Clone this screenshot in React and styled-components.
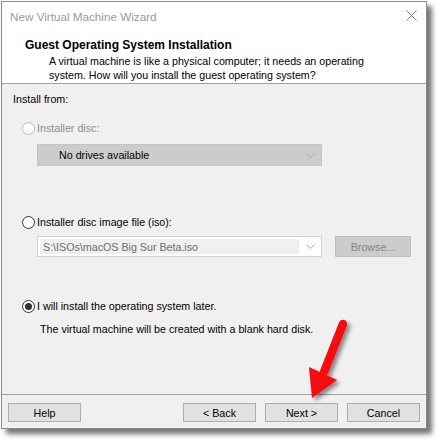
import React from "react";
import styled, { createGlobalStyle } from "styled-components";

const GlobalStyle = createGlobalStyle`
  html, body {
    margin: 0;
    padding: 0;
    background: #ffffff;
  }
  body {
    font-family: "Liberation Sans", Arial, sans-serif;
    font-size: 10.7px;
    color: #000000;
  }
`;

const App = () => {
  return (
    <Page>
      <GlobalStyle />
      <Window>
        <TitleBar>
          <TitleText>New Virtual Machine Wizard</TitleText>
          <CloseButton>
            <svg width="11" height="11" viewBox="0 0 11 11">
              <path d="M0.5 0.5 L10.5 10.5 M10.5 0.5 L0.5 10.5" stroke="#7a7a7a" strokeWidth="1" fill="none" />
            </svg>
          </CloseButton>
        </TitleBar>

        <Header>
          <Heading>Guest Operating System Installation</Heading>
          <Description>
            A virtual machine is like a physical computer; it needs an operating
            <br />
            system. How will you install the guest operating system?
          </Description>
        </Header>

        <Body>
          <Label>Install from:</Label>

          <RadioRow $top={15} $disabled>
            <Radio $disabled />
            <span>Installer disc:</span>
          </RadioRow>
          <DriveSelect>
            <span>No drives available</span>
            <Chevron />
          </DriveSelect>

          <RadioRow $top={49}>
            <Radio />
            <span>Installer disc image file (iso):</span>
          </RadioRow>
          <FileRow>
            <IsoCombo>
              <IsoText>S:\ISOs\macOS Big Sur Beta.iso</IsoText>
              <Chevron />
            </IsoCombo>
            <BrowseButton>Browse...</BrowseButton>
          </FileRow>

          <RadioRow $top={42}>
            <Radio $checked />
            <span>I will install the operating system later.</span>
          </RadioRow>
          <Note>The virtual machine will be created with a blank hard disk.</Note>
        </Body>

        <Footer>
          <Button>Help</Button>
          <Spacer />
          <Button>&lt; Back</Button>
          <Button>Next &gt;</Button>
          <Button>Cancel</Button>
        </Footer>
      </Window>

      <Pointer width="442" height="444" viewBox="0 0 442 444">
        <defs>
          <filter id="arrowShadow" x="-50%" y="-50%" width="200%" height="200%">
            <feDropShadow dx="3" dy="3" stdDeviation="2" floodColor="#000" floodOpacity="0.45" />
          </filter>
        </defs>
        <g filter="url(#arrowShadow)">
          <line x1="343" y1="324" x2="324" y2="372" stroke="#f50a0a" strokeWidth="8.5" strokeLinecap="round" />
          <polygon points="309,367 337,380 312,398" fill="#f50a0a" />
        </g>
      </Pointer>
    </Page>
  );
};

const Chevron = () => (
  <ChevronIcon width="9" height="5" viewBox="0 0 9 5">
    <path d="M0.5 0.5 L4.5 4.5 L8.5 0.5" stroke="#a9a9a9" strokeWidth="1" fill="none" />
  </ChevronIcon>
);

const Page = styled.div`
  position: relative;
  width: 442px;
  height: 444px;
  padding: 1px 0 0 1px;
  box-sizing: border-box;
`;

const Window = styled.div`
  width: 426px;
  height: 428px;
  box-sizing: border-box;
  border: 1px solid #8a8a8a;
  background: #ffffff;
  display: flex;
  flex-direction: column;
  box-shadow: 5px 5px 5px rgba(0, 0, 0, 0.55);
`;

const TitleBar = styled.div`
  height: 30px;
  display: flex;
  align-items: center;
  justify-content: space-between;
  padding: 0 9px 0 8px;
  flex-shrink: 0;
`;

const TitleText = styled.div`
  font-size: 11.7px;
  color: #9a9a9a;
  margin-top: -2px;
`;

const CloseButton = styled.div`
  display: flex;
  align-items: center;
  margin-top: -4px;
`;

const Header = styled.div`
  height: 52px;
  box-sizing: border-box;
  padding: 6px 0 0 23px;
  border-bottom: 1px solid #a0a0a0;
  flex-shrink: 0;
`;

const Heading = styled.div`
  font-size: 12px;
  font-weight: 700;
  line-height: 14px;
`;

const Description = styled.div`
  margin-top: 2px;
  padding-left: 24px;
  line-height: 14px;
`;

const Body = styled.div`
  flex: 1;
  background: #f0f0f0;
  border-bottom: 1px solid #a0a0a0;
  padding: 8px 0 0 11px;
  display: flex;
  flex-direction: column;
  align-items: flex-start;
`;

const Label = styled.div`
  line-height: 14px;
`;

const RadioRow = styled.div`
  display: flex;
  align-items: center;
  height: 14px;
  margin-top: ${(p) => p.$top}px;
  padding-left: 9px;
  color: ${(p) => (p.$disabled ? "#8c8c8c" : "#000000")};
`;

const Radio = styled.span`
  position: relative;
  width: 13px;
  height: 13px;
  box-sizing: border-box;
  border-radius: 50%;
  border: 1px solid ${(p) => (p.$disabled ? "#bcbcbc" : "#333333")};
  background: #ffffff;
  margin-right: 2px;
  flex-shrink: 0;

  &::after {
    content: "";
    display: ${(p) => (p.$checked ? "block" : "none")};
    position: absolute;
    left: 2px;
    top: 2px;
    width: 7px;
    height: 7px;
    border-radius: 50%;
    background: #333333;
  }
`;

const DriveSelect = styled.div`
  margin: 9px 0 0 24px;
  width: 285px;
  height: 22px;
  box-sizing: border-box;
  background: #cccccc;
  border: 1px solid #c4c4c4;
  display: flex;
  align-items: center;
  justify-content: space-between;
  padding: 0 6px 0 21px;
`;

const ChevronIcon = styled.svg`
  display: block;
`;

const FileRow = styled.div`
  display: flex;
  align-items: center;
  margin: 7px 0 0 24px;
  gap: 13px;
`;

const IsoCombo = styled.div`
  width: 285px;
  height: 21px;
  box-sizing: border-box;
  background: #ffffff;
  border: 1px solid #d0d0d0;
  display: flex;
  align-items: center;
  padding: 2px 6px 2px 2px;
  gap: 7px;
`;

const IsoText = styled.div`
  flex: 1;
  height: 100%;
  background: #f0f0f0;
  color: #6d6d6d;
  display: flex;
  align-items: center;
  padding-left: 3px;
`;

const BrowseButton = styled.div`
  width: 76px;
  height: 21px;
  box-sizing: border-box;
  background: #cccccc;
  border: 1px solid #bfbfbf;
  color: #838383;
  display: flex;
  align-items: center;
  justify-content: center;
`;

const Note = styled.div`
  margin: 9px 0 0 27px;
  line-height: 14px;
`;

const Footer = styled.div`
  height: 33px;
  box-sizing: border-box;
  background: #f0f0f0;
  flex-shrink: 0;
  display: flex;
  align-items: flex-start;
  padding: 8px 6px 0 6px;
  gap: 9px;
`;

const Spacer = styled.div`
  flex: 1;
`;

const Button = styled.div`
  width: 73px;
  height: 19px;
  box-sizing: border-box;
  background: #e1e1e1;
  border: 1px solid #adadad;
  display: flex;
  align-items: center;
  justify-content: center;
`;

const Pointer = styled.svg`
  position: absolute;
  left: 0;
  top: 0;
  pointer-events: none;
`;

export default App;
